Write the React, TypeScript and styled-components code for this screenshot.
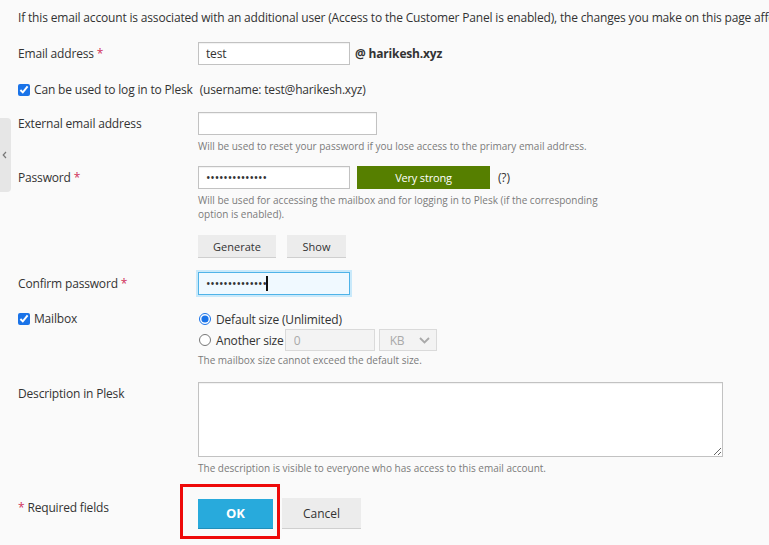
import React from "react";
import styled, { createGlobalStyle } from "styled-components";

const Global = createGlobalStyle`
  html, body { margin: 0; padding: 0; background: #fafafa; }
  body { font-family: "Open Sans", "Liberation Sans", sans-serif; font-size: 12px; color: #333; letter-spacing: -0.17px; }
  * { box-sizing: border-box; }
`;

const Page = styled.div`
  position: relative;
  width: 769px;
  height: 545px;
  overflow: hidden;
  padding: 10px 0 0 18px;
  display: flex;
  flex-direction: column;
`;

const SideTab = styled.div`
  position: absolute;
  left: 0;
  top: 118px;
  width: 11px;
  height: 74px;
  background: #e6e6e6;
  border-radius: 0 4px 4px 0;
  display: flex;
  align-items: center;
  justify-content: flex-start;
  padding-left: 2px;
`;

const Intro = styled.div`
  line-height: 16px;
  white-space: nowrap;
  overflow: hidden;
`;

const Row = styled.div<{ $mt: number; $align?: string }>`
  display: grid;
  grid-template-columns: 180px 1fr;
  align-items: ${(p) => p.$align || "start"};
  margin-top: ${(p) => p.$mt}px;
`;

const Label = styled.div<{ $lh?: number }>`
  line-height: ${(p) => p.$lh || 23}px;
  white-space: nowrap;
`;

const Req = styled.span`
  color: #d0305a;
`;

const Field = styled.div`
  display: flex;
  flex-direction: column;
  align-items: flex-start;
`;

const Inline = styled.div<{ $gap?: number }>`
  display: flex;
  align-items: center;
  gap: ${(p) => p.$gap ?? 0}px;
`;

const TextInput = styled.input<{ $w: number; $focus?: boolean }>`
  width: ${(p) => p.$w}px;
  height: 23px;
  border: 1px solid ${(p) => (p.$focus ? "#4fb3e8" : "#c2c2c2")};
  background: ${(p) => (p.$focus ? "#f0f9ff" : "#fff")};
  box-shadow: ${(p) => (p.$focus ? "0 0 0 2px #c9e9fa" : "inset 0 1px 1px rgba(0,0,0,0.06)")};
  padding: 0 7px;
  font-family: inherit;
  font-size: 12px;
  letter-spacing: -0.17px;
  color: #333;
  outline: none;
  margin: 0;
`;

const CaretWrap = styled.div`
  position: relative;
`;

const Caret = styled.span`
  position: absolute;
  left: 68px;
  top: 4px;
  width: 2px;
  height: 15px;
  background: #111;
`;

const Domain = styled.span`
  font-weight: 700;
  margin-left: 5px;
`;

const Check = styled.input`
  width: 12px;
  height: 12px;
  margin: 0 4px 0 0;
  accent-color: #1a73e8;
`;

const CheckLabel = styled.label`
  display: flex;
  align-items: center;
  line-height: 16px;
  white-space: nowrap;
`;

const Username = styled.span`
  margin-left: 7px;
`;

const Hint = styled.div<{ $mt?: number; $w?: number }>`
  margin-top: ${(p) => p.$mt ?? 4}px;
  font-size: 10px;
  line-height: 14px;
  letter-spacing: 0;
  color: #7a7a7a;
  max-width: ${(p) => p.$w ?? 600}px;
`;

const Strength = styled.div`
  width: 133px;
  height: 23px;
  margin-left: 7px;
  background: #567f00;
  color: #fff;
  font-size: 11px;
  display: flex;
  align-items: center;
  justify-content: center;
`;

const Help = styled.span`
  margin-left: 8px;
`;

const GrayButton = styled.button<{ $w: number; $h?: number; $fs?: number }>`
  width: ${(p) => p.$w}px;
  height: ${(p) => p.$h ?? 23}px;
  border: none;
  border-bottom: 1px solid #cfcfcf;
  background: #ececec;
  color: #333;
  font-family: inherit;
  font-size: ${(p) => p.$fs ?? 11}px;
  padding: 0;
  cursor: pointer;
`;

const PrimaryButton = styled.button`
  width: 75px;
  height: 30px;
  border: none;
  border-bottom: 1px solid #1f8fbb;
  background: #28aadc;
  color: #fff;
  font-family: inherit;
  font-weight: 700;
  font-size: 13px;
  padding: 0;
  cursor: pointer;
`;

const Highlight = styled.div`
  position: relative;
`;

const RedBox = styled.span`
  position: absolute;
  left: -18px;
  right: -7px;
  top: -15px;
  bottom: -10px;
  border: 3px solid #ee0a0a;
  pointer-events: none;
`;

const Radio = styled.input`
  width: 12px;
  height: 12px;
  margin: 0 5px 0 1px;
  accent-color: #1a73e8;
`;

const RadioLabel = styled.label<{ $h: number }>`
  display: flex;
  align-items: center;
  height: ${(p) => p.$h}px;
  font-size: 12px;
  white-space: nowrap;
`;

const DisabledInput = styled.input`
  width: 90px;
  height: 22px;
  margin: 0 0 0 1px;
  border: 1px solid #dadada;
  background: #f3f3f3;
  color: #a9a9a9;
  font-family: inherit;
  font-size: 12px;
  padding: 0 8px;
`;

const FakeSelect = styled.div`
  width: 58px;
  height: 22px;
  margin-left: 4px;
  border: 1px solid #dadada;
  background: #f3f3f3;
  color: #a9a9a9;
  display: flex;
  align-items: center;
  justify-content: space-between;
  padding: 0 6px 0 10px;
`;

const TextArea = styled.textarea`
  width: 525px;
  height: 75px;
  border: 1px solid #c2c2c2;
  background: #fff;
  box-shadow: inset 0 1px 1px rgba(0,0,0,0.06);
  font-family: inherit;
  margin: 0;
  display: block;
`;

const Footer = styled.div`
  display: grid;
  grid-template-columns: 180px 1fr;
  margin-top: 23px;
`;

const FooterLabel = styled.div`
  line-height: 20px;
`;

export default function App() {
  return (
    <>
      <Global />
      <Page>
        <SideTab>
          <svg width="5" height="8" viewBox="0 0 5 8">
            <path d="M4 1 L1.2 4 L4 7" fill="none" stroke="#777" strokeWidth="1.2" />
          </svg>
        </SideTab>
        <Intro>
          If this email account is associated with an additional user (Access to the Customer Panel is enabled), the changes you make on this page affect
        </Intro>

        <Row $mt={16} $align="center">
          <Label>
            Email address <Req>*</Req>
          </Label>
          <Inline>
            <TextInput $w={152} defaultValue="test" />
            <Domain>@ harikesh.xyz</Domain>
          </Inline>
        </Row>

        <Row $mt={17} $align="center">
          <CheckLabel style={{ gridColumn: "1 / 3" }}>
            <Check type="checkbox" defaultChecked />
            Can be used to log in to Plesk
            <Username>(username: test@harikesh.xyz)</Username>
          </CheckLabel>
        </Row>

        <Row $mt={14}>
          <Label>External email address</Label>
          <Field>
            <TextInput $w={179} />
            <Hint>Will be used to reset your password if you lose access to the primary email address.</Hint>
          </Field>
        </Row>

        <Row $mt={13}>
          <Label>
            Password <Req>*</Req>
          </Label>
          <Field>
            <Inline>
              <TextInput $w={152} type="password" defaultValue="aaaaaaaaaaaaaa" />
              <Strength>Very strong</Strength>
              <Help>(?)</Help>
            </Inline>
            <Hint $w={420}>
              Will be used for accessing the mailbox and for logging in to Plesk (if the corresponding option is enabled).
            </Hint>
            <Inline $gap={11} style={{ marginTop: 14 }}>
              <GrayButton $w={78}>Generate</GrayButton>
              <GrayButton $w={59}>Show</GrayButton>
            </Inline>
          </Field>
        </Row>

        <Row $mt={14}>
          <Label>
            Confirm password <Req>*</Req>
          </Label>
          <CaretWrap>
            <TextInput $w={152} $focus type="password" defaultValue="aaaaaaaaaaaaaa" />
            <Caret />
          </CaretWrap>
        </Row>

        <Row $mt={14}>
          <CheckLabel style={{ height: 20 }}>
            <Check type="checkbox" defaultChecked />
            Mailbox
          </CheckLabel>
          <Field>
            <RadioLabel $h={20}>
              <Radio type="radio" name="size" defaultChecked />
              Default size (Unlimited)
            </RadioLabel>
            <RadioLabel $h={22}>
              <Radio type="radio" name="size" />
              Another size
              <DisabledInput disabled defaultValue="0" />
              <FakeSelect>
                <span>KB</span>
                <svg width="11" height="7" viewBox="0 0 11 7">
                  <path d="M1 1 L5.5 5.5 L10 1" fill="none" stroke="#a9a9a9" strokeWidth="1.8" />
                </svg>
              </FakeSelect>
            </RadioLabel>
            <Hint $mt={2}>The mailbox size cannot exceed the default size.</Hint>
          </Field>
        </Row>

        <Row $mt={15}>
          <Label>Description in Plesk</Label>
          <Field>
            <TextArea />
            <Hint>The description is visible to everyone who has access to this email account.</Hint>
          </Field>
        </Row>

        <Footer>
          <FooterLabel>
            <Req>*</Req> Required fields
          </FooterLabel>
          <Inline $gap={9}>
            <Highlight>
              <PrimaryButton>OK</PrimaryButton>
              <RedBox />
            </Highlight>
            <GrayButton $w={79} $h={31} $fs={12}>Cancel</GrayButton>
          </Inline>
        </Footer>
      </Page>
    </>
  );
}
